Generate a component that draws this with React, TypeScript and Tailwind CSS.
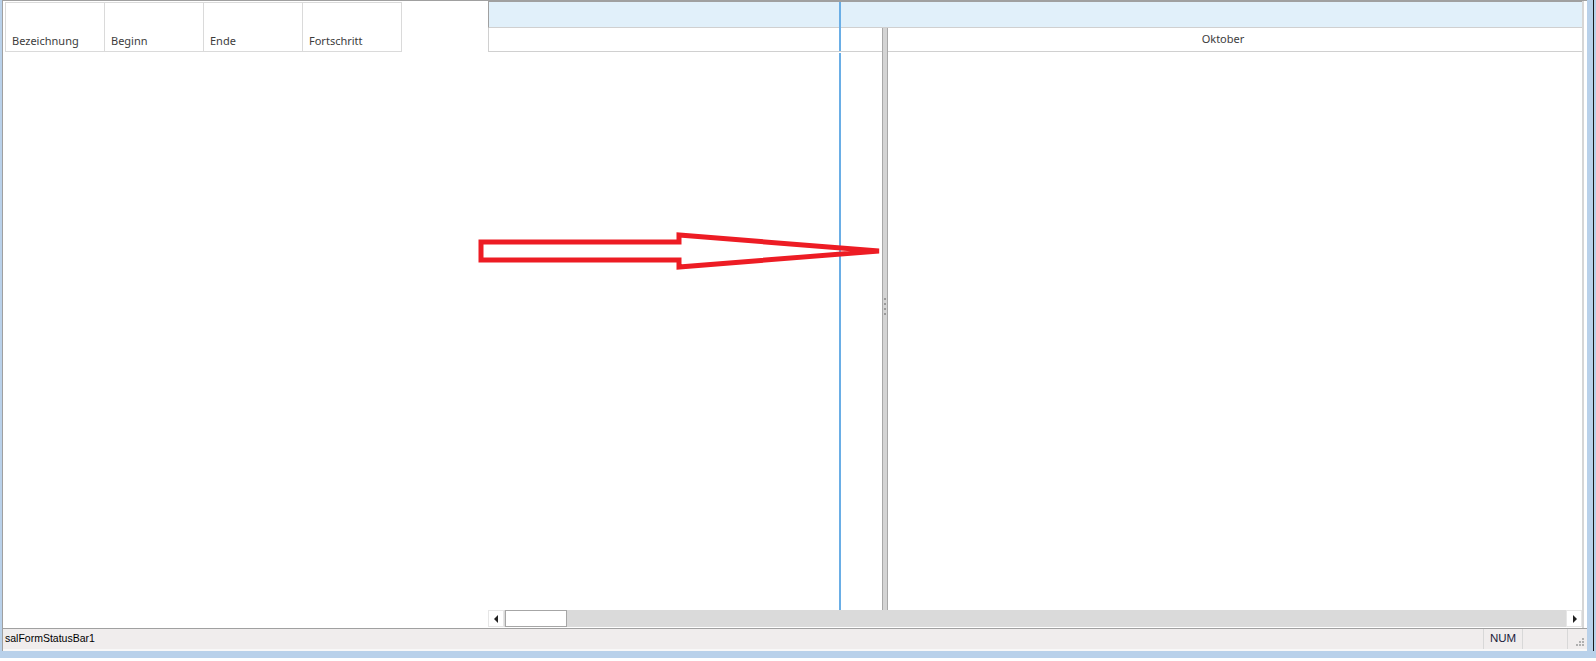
import React from "react";

const columns = ["Bezeichnung", "Beginn", "Ende", "Fortschritt"];

const App = () => {
  return (
    <div className="relative w-[1596px] h-[661px] bg-white overflow-hidden font-['Noto_Sans',sans-serif]">
      <div className="flex h-[651px]">
        {/* linker Fensterrahmen */}
        <div className="w-[2px] bg-[#b9d1ea]" />

        <div className="flex flex-col w-[1585px] border-l border-t border-[#a0a0a0]">
          {/* Gitterbereich */}
          <div className="flex flex-1 min-h-0">
            {/* linke Tabelle */}
            <div className="w-[485px] bg-white pl-[2px] pt-[1px]">
              <div className="flex w-[397px] border-l border-t border-[#dadada]">
                {columns.map((col) => (
                  <div
                    key={col}
                    className="w-[99px] h-[49px] border-r border-b border-[#dadada] flex items-end pl-[6px] pb-[2px] text-[11px] text-[#3c3c3c]"
                  >
                    {col}
                  </div>
                ))}
              </div>
            </div>

            {/* Gantt-Bereich */}
            <div className="relative w-[1094px] flex flex-col bg-white">
              <div className="h-[27px] bg-[#e1f0fa] border-t border-l border-[#a0a0a0] border-b border-b-[#d0d0d0]" />

              <div className="flex flex-1 min-h-0">
                <div className="w-[394px] flex flex-col">
                  <div className="h-[24px] border-l border-b border-[#d0d0d0]" />
                </div>

                {/* Splitter */}
                <div className="w-[6px] bg-[#d4d4d4] border-x border-[#a8a8a8] flex flex-col items-center justify-center pb-[25px]">
                  <div className="flex flex-col gap-[3px]">
                    <div className="w-[2px] h-[2px] bg-[#9a9a9a]" />
                    <div className="w-[2px] h-[2px] bg-[#9a9a9a]" />
                    <div className="w-[2px] h-[2px] bg-[#9a9a9a]" />
                    <div className="w-[2px] h-[2px] bg-[#9a9a9a]" />
                  </div>
                </div>

                <div className="flex-1 flex flex-col">
                  <div className="h-[24px] border-b border-[#d0d0d0] flex items-center justify-center pr-[24px] text-[11px] text-[#3c3c3c]">
                    Oktober
                  </div>
                </div>
              </div>

              {/* horizontale Scrollleiste */}
              <div className="h-[17px] mb-[1px] flex bg-[#dadada]">
                <div className="w-[16px] bg-white border border-[#e6e6e6] flex items-center justify-center">
                  <svg width="5" height="8" viewBox="0 0 5 8">
                    <path d="M4 0 L0 4 L4 8 Z" fill="#222" />
                  </svg>
                </div>
                <div className="w-[62px] ml-[1px] bg-white border border-[#a6a6a6]" />
                <div className="flex-1" />
                <div className="w-[16px] bg-white border border-[#e6e6e6] flex items-center justify-center">
                  <svg width="5" height="8" viewBox="0 0 5 8">
                    <path d="M1 0 L5 4 L1 8 Z" fill="#222" />
                  </svg>
                </div>
              </div>

              {/* Heute-Linie */}
              <div className="absolute left-[351px] top-[1px] h-[49px] w-[2px] bg-[#6aaee6]" />
              <div className="absolute left-[351px] top-[52px] h-[557px] w-[2px] bg-[#6aaee6]" />
            </div>

            <div className="w-[5px] border-l-2 border-[#d6d6d6] bg-white" />
          </div>

          {/* Statusleiste */}
          <div className="h-[23px] flex border-t border-[#a0a0a0] border-b-2 border-b-[#f8f8f8] bg-[#f0eded] text-[10.5px] font-['Liberation_Sans',sans-serif] text-black">
            <div className="flex-1 flex items-center pl-[2px]">salFormStatusBar1</div>
            <div className="w-[40px] border-x border-[#d8d8d8] flex items-center justify-center text-[11.5px] text-[#1c1c3c]">
              NUM
            </div>
            <div className="w-[45px] border-r border-[#d8d8d8]" />
            <div className="w-[19px] relative">
              <svg className="absolute right-[3px] bottom-[1px]" width="10" height="10" viewBox="0 0 10 10">
                <rect x="8" y="0" width="2" height="2" fill="#b0b0b0" />
                <rect x="5" y="3" width="2" height="2" fill="#b0b0b0" />
                <rect x="8" y="3" width="2" height="2" fill="#b0b0b0" />
                <rect x="2" y="6" width="2" height="2" fill="#b0b0b0" />
                <rect x="5" y="6" width="2" height="2" fill="#b0b0b0" />
                <rect x="8" y="6" width="2" height="2" fill="#b0b0b0" />
              </svg>
            </div>
          </div>
        </div>

        {/* rechter Fensterrahmen */}
        <div className="w-[9px] flex">
          <div className="w-[6px] bg-[#b9d1ea]" />
          <div className="w-[1px] bg-[#1a1a1a]" />
          <div className="w-[2px] bg-[#b9d1ea]" />
        </div>
      </div>
      <div className="h-[7px] bg-[#b9d1ea]" />

      {/* roter Pfeil */}
      <svg className="absolute left-0 top-0 pointer-events-none" width="1596" height="661">
        <polygon
          points="481,242 679,242 679,235 879,251 679,267 679,260 481,260"
          fill="none"
          stroke="#ed1c24"
          strokeWidth="5"
          strokeLinejoin="miter"
        />
      </svg>
    </div>
  );
};

export default App;
